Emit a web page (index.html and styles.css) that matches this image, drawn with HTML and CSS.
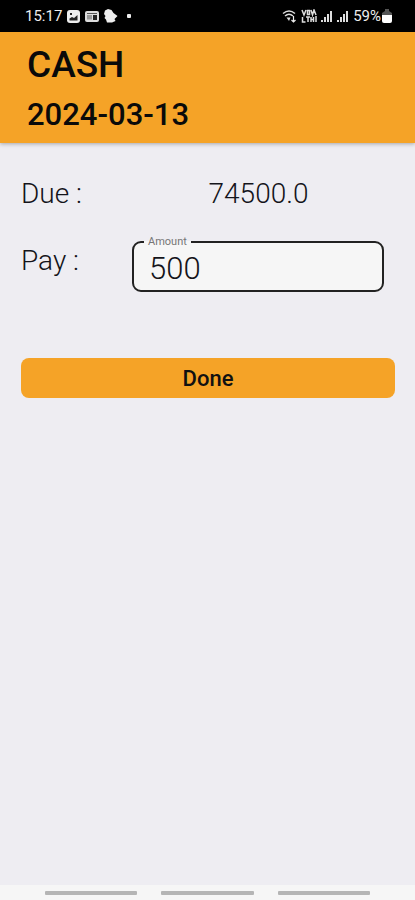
FILE: index.html
```html
<!DOCTYPE html>
<html lang="en">
<head>
    <meta charset="UTF-8">
    <meta name="viewport" content="width=device-width, initial-scale=1.0">
    <title>Cash</title>
    <link rel="stylesheet" href="styles.css">
</head>
<body>
    <div class="status-bar">
        <div class="status-left">
            <span>15:17</span>
            <svg width="13" height="13" viewBox="0 0 13 13">
                <rect width="13" height="13" rx="3" fill="#eee"/>
                <path d="M3 3h2v2H3z" fill="#222"/>
                <path d="M2.500 8.500L5 7l2 1 3.500-3v5.500h-8z" fill="#222"/>
            </svg>
            <svg width="14" height="12" viewBox="0 0 14 12">
                <rect y="1" width="14" height="11" rx="2" fill="#ddd"/>
                <path d="M2 5h5v4.500H2z" fill="#999"/>
                <path d="M8 5h4v5H8z" fill="#222"/>
                <path d="M2 3.500h10" stroke="#555"/>
            </svg>
            <svg width="14" height="14" viewBox="0 0 14 14">
                <path d="M1 1.500L4 0l3.500 1 2 3L13.500 7 10.500 10l1 2L8 13.500H3L2 10.500 0.500 9l1-2L0 5z" fill="#eee"/>
            </svg>
            <span class="dot"></span>
        </div>
        <div class="status-right">
            <svg width="15" height="14" viewBox="0 0 15 14" fill="none" stroke="#ddd" stroke-width="1.500">
                <path d="M1 4.500q6-5 12 0M3 7q4-3.500 8 0"/>
                <path d="M4.500 8.500h4L7 12z" fill="#ddd" stroke="none"/>
                <path d="M11.500 7v6m-2-2 2 2 2-2" stroke="#eee" stroke-width="1.200"/>
            </svg>
            <svg width="16" height="14" viewBox="0 0 16 14" fill="none" stroke="#ddd" stroke-width="1.500">
                <path d="M1 1l2 5 2-5M6.500 1.500h2v4h-2zM10 1l1.500 5L13 1l2 5"/>
                <path d="M1.500 8v5h3M5 8h4M7 8v5M10 8v5M10 10.500h2.500M12.500 8v5M15 7v6"/>
            </svg>
            <svg width="12" height="12" viewBox="0 0 12 12" fill="#ddd">
                <path d="M0 10h2v2H0zM3 7h2v5H3zM6 4h2v8H6zM9 1h2v11H9z"/>
            </svg>
            <svg width="12" height="12" viewBox="0 0 12 12" fill="#ddd">
                <path d="M0 10h2v2H0zM3 7h2v5H3zM6 4h2v8H6zM9 1h2v11H9z"/>
            </svg>
            <span class="battery">59%
                <svg width="10" height="14" viewBox="0 0 10 14">
                    <path d="M3 0h4v2l3 2v3H0V4l3-2z" fill="#555"/>
                    <path d="M0 6h10v6q0 2-2 2H2q-2 0-2-2z" fill="#fff"/>
                </svg>
            </span>
        </div>
    </div>

    <header class="header">
        <h1>CASH</h1>
        <h2>2024-03-13</h2>
    </header>

    <main class="content">
        <div class="row">
            <span class="row-label">Due :</span>
            <span class="due">74500.0</span>
        </div>
        <div class="row pay-row">
            <span class="row-label">Pay :</span>
            <fieldset class="field">
                <legend><label for="amount">Amount</label></legend>
                <input type="text" inputmode="decimal" id="amount" value="500">
            </fieldset>
        </div>
        <button type="button" class="done">Done</button>
    </main>

    <div class="nav-bar">
        <span></span>
        <span></span>
        <span></span>
    </div>
</body>
</html>
```
FILE: styles.css
```css
body {
    font-family: Roboto, "Liberation Sans", sans-serif;
    display: flex;
    flex-direction: column;
    min-height: 100vh;
    margin: 0;
    background: #eeedf2;
    color: #14141a;
}
.status-bar {
    display: flex;
    justify-content: space-between;
    align-items: center;
    height: 32px;
    padding: 0 23px 0 25px;
    background: #000;
    color: #eee;
    font-size: 15px;
}
.status-left, .status-right, .battery {
    display: flex;
    align-items: center;
}
.status-left {
    gap: 5px;
}
.status-right {
    gap: 4px;
}
.battery {
    gap: 1px;
}
.dot {
    width: 4px;
    height: 4px;
    margin-left: 4px;
    border-radius: 1px;
    background: #eee;
}
.header {
    padding: 11px 27px;
    background: #f5a327;
    color: #0a0a0a;
    box-shadow: 0 1px 4px rgba(0, 0, 0, 0.3);
}
.header h1, .header h2 {
    margin: 0;
    font-weight: 500;
}
.header h1 {
    font-size: 37px;
    line-height: 44px;
}
.header h2 {
    margin-top: 11px;
    font-size: 31px;
    line-height: 34px;
}
.content {
    flex: 1;
    display: flex;
    flex-direction: column;
    padding: 33px 20px 32px 21px;
}
.row {
    display: grid;
    grid-template-columns: 111px 1fr;
    font-size: 28px;
    font-weight: 300;
    line-height: 36px;
}
.due {
    padding-right: 10px;
    text-align: center;
}
.pay-row {
    margin-top: 24px;
}
.pay-row .row-label {
    padding-top: 7px;
}
.field {
    min-width: 0;
    margin: 0 11px 0 0;
    padding: 0 15px;
    border: 2px solid #222;
    border-radius: 9px;
    background: #f6f6f6;
}
.field legend {
    margin-left: -5px;
    padding: 0 4px;
    font-size: 11px;
    font-weight: 400;
    line-height: 12px;
    color: #777;
}
.field input {
    display: block;
    box-sizing: border-box;
    width: 100%;
    height: 42px;
    padding: 0 0 2px;
    border: none;
    outline: none;
    background: transparent;
    color: #14141a;
    font-family: inherit;
    font-size: 31px;
    font-weight: 300;
}
.done {
    height: 40px;
    margin-top: 66px;
    border: none;
    border-radius: 8px;
    background: #f5a327;
    color: #111;
    font-family: inherit;
    font-size: 22px;
    font-weight: 500;
    cursor: pointer;
}
.nav-bar {
    display: flex;
    justify-content: center;
    gap: 24px;
    padding: 6px 45px 5px;
    background: #f6f6f6;
}
.nav-bar span {
    flex: 1;
    height: 4px;
    border-radius: 1px;
    background: #b5b5b5;
}
```
